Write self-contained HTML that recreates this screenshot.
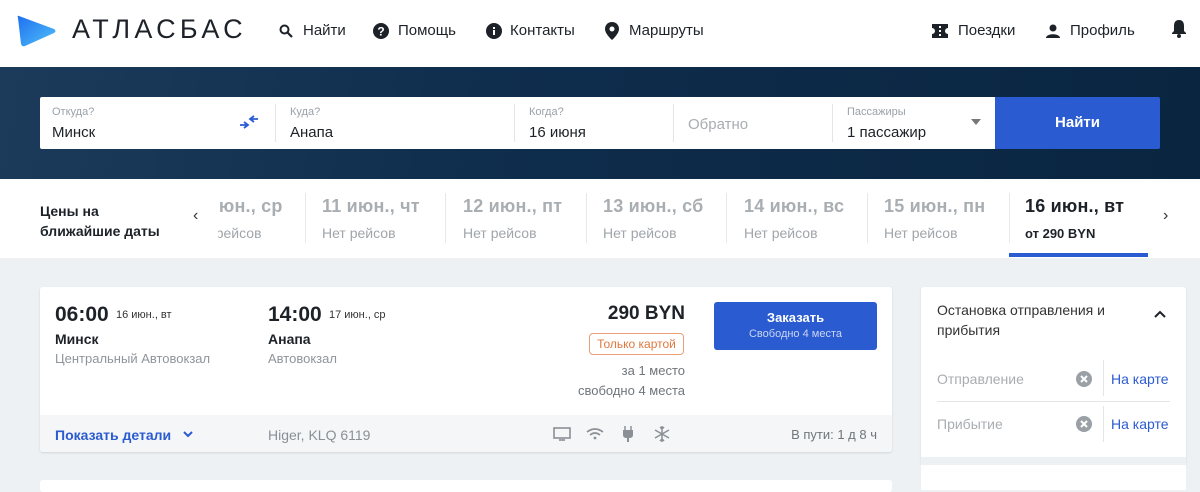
<!DOCTYPE html>
<html><head><meta charset="utf-8"><style>
*{margin:0;padding:0;box-sizing:border-box}
body{width:1200px;height:490px;overflow:hidden;background:#eef1f4;font-family:"Liberation Sans","DejaVu Sans",sans-serif;position:relative;color:#1d2228}
.a{position:absolute;white-space:nowrap}
.hdr{position:absolute;left:0;top:0;width:1200px;height:67px;background:#fff}
.nav{font-size:15px;color:#1d2228;top:22px}
.hero{position:absolute;left:0;top:67px;width:1200px;height:112px;background:linear-gradient(100deg,#1c3a5a 0%,#0f2d4d 40%,#092540 100%)}
.form{position:absolute;left:40px;top:97px;width:955px;height:52px;background:#fff;border-radius:2px 0 0 2px}
.lbl{font-size:11px;color:#9aa1a8;top:9px}
.val{font-size:15px;color:#1d2228;top:27px}
.sep{position:absolute;top:7px;width:1px;height:38px;background:#e3e6e9}
.btn{position:absolute;left:995px;top:97px;width:165px;height:52px;background:#2b5bd0;color:#fff;font-weight:bold;font-size:15px;text-align:center;line-height:52px;border-radius:0 2px 2px 0}
.dates{position:absolute;left:0;top:179px;width:1200px;height:79px;background:#fff}
.dt{font-size:18px;font-weight:bold;color:#a9aeb3;top:17px;letter-spacing:0.2px}
.dn{font-size:14px;color:#a0a5aa;top:46px}
.vs{position:absolute;top:14px;width:1px;height:50px;background:#e6e8ea}
.card{position:absolute;left:40px;top:287px;width:852px;height:165px;background:#fff;border-radius:3px;box-shadow:0 1px 2px rgba(0,0,0,.12)}
.foot{position:absolute;left:0;top:128px;width:852px;height:37px;background:#f4f6f8;border-radius:0 0 3px 3px}
.side{position:absolute;left:921px;top:287px;width:265px;height:178px;background:#fff;border-radius:3px;box-shadow:0 1px 2px rgba(0,0,0,.1)}
</style></head><body>
<div class="hdr">
<svg class="a" style="left:16px;top:14px" width="42" height="34" viewBox="0 0 42 34"><defs><linearGradient id="g" x1="0" y1="0" x2="1" y2="1"><stop offset="0" stop-color="#1f6ff0"/><stop offset="1" stop-color="#4fc0f8"/></linearGradient></defs><path d="M3 2 Q1 1 2 4 L5 30 Q6 33 9 32 L38 19 Q41 17 38 15 Z" fill="url(#g)"/></svg>
<div class="a" style="left:72px;top:14px;font-size:27px;letter-spacing:4.3px;color:#1d2228;font-weight:500">АТЛАСБАС</div>
<svg class="a" style="left:279px;top:24px" width="14" height="14" viewBox="0 0 14 14"><circle cx="5.5" cy="5.5" r="4" fill="none" stroke="#1d2228" stroke-width="2"/><path d="M8.5 8.5 L13 13" stroke="#1d2228" stroke-width="2.2"/></svg>
<div class="a nav" style="left:303px">Найти</div>
<svg class="a" style="left:373px;top:23px" width="16" height="16" viewBox="0 0 16 16"><circle cx="8" cy="8" r="8" fill="#1d2228"/><text x="8" y="12.5" font-size="12" font-weight="bold" fill="#fff" text-anchor="middle" font-family="Liberation Sans">?</text></svg>
<div class="a nav" style="left:398px">Помощь</div>
<svg class="a" style="left:486px;top:23px" width="16" height="16" viewBox="0 0 16 16"><circle cx="8" cy="8" r="8" fill="#1d2228"/><rect x="7" y="7" width="2" height="5" fill="#fff"/><rect x="7" y="4" width="2" height="2" fill="#fff"/></svg>
<div class="a nav" style="left:510px">Контакты</div>
<svg class="a" style="left:605px;top:22px" width="14" height="18" viewBox="0 0 14 18"><path d="M7 0 C3 0 0 3 0 7 C0 12 7 18 7 18 C7 18 14 12 14 7 C14 3 11 0 7 0Z" fill="#1d2228"/><circle cx="7" cy="7" r="2.5" fill="#fff"/></svg>
<div class="a nav" style="left:629px">Маршруты</div>
<svg class="a" style="left:932px;top:24px" width="16" height="14" viewBox="0 0 16 14"><path d="M0 0H16V4a3 3 0 0 0 0 6V14H0V10a3 3 0 0 0 0-6Z" fill="#1d2228"/><rect x="7" y="2" width="2" height="2" fill="#fff"/><rect x="7" y="6" width="2" height="2" fill="#fff"/><rect x="7" y="10" width="2" height="2" fill="#fff"/></svg>
<div class="a nav" style="left:958px">Поездки</div>
<svg class="a" style="left:1046px;top:24px" width="14" height="14" viewBox="0 0 14 14"><circle cx="7" cy="4" r="3.5" fill="#1d2228"/><path d="M0 14 C0 9 14 9 14 14Z" fill="#1d2228"/></svg>
<div class="a nav" style="left:1070px">Профиль</div>
<svg class="a" style="left:1171px;top:19px" width="16" height="19" viewBox="0 0 16 19"><path d="M8 1 C4 1 3 4 3 7 V12 L1 14 V15 H15 V14 L13 12 V7 C13 4 12 1 8 1Z" fill="#1d2228"/><circle cx="8" cy="17" r="2" fill="#1d2228"/></svg>
</div>
<div class="hero"></div>
<div class="form">
<div class="a lbl" style="left:12px">Откуда?</div><div class="a val" style="left:12px">Минск</div>
<svg class="a" style="left:199px;top:18px" width="20" height="14" viewBox="0 0 20 14"><path d="M11 4H19M15 1L11 4L15 7" stroke="#2b5bd0" stroke-width="1.8" fill="none"/><path d="M1 10H9M5 7L9 10L5 13" stroke="#2b5bd0" stroke-width="1.8" fill="none"/></svg>
<div class="sep" style="left:235px"></div>
<div class="a lbl" style="left:250px">Куда?</div><div class="a val" style="left:250px">Анапа</div>
<div class="sep" style="left:474px"></div>
<div class="a lbl" style="left:489px">Когда?</div><div class="a val" style="left:489px">16 июня</div>
<div class="sep" style="left:633px"></div>
<div class="a" style="left:648px;top:19px;font-size:15px;color:#a8adb2">Обратно</div>
<div class="sep" style="left:792px"></div>
<div class="a lbl" style="left:807px">Пассажиры</div><div class="a val" style="left:807px">1 пассажир</div>
<div class="a" style="left:931px;top:22px;width:0;height:0;border-left:5px solid transparent;border-right:5px solid transparent;border-top:6px solid #777"></div>
</div>
<div class="btn">Найти</div>
<div class="dates">
<div class="a" style="left:40px;top:22px;font-size:14px;font-weight:bold;line-height:20px;color:#1d2228">Цены на<br>ближайшие даты</div>
<div class="a" style="left:193px;top:28px;font-size:16px;color:#333">‹</div>
<div class="a" style="left:218px;top:0;width:88px;height:79px;overflow:hidden">
<div class="a dt" style="left:-36px">10 июн., ср</div><div class="a dn" style="left:-30px">Нет рейсов</div></div>
<div class="vs" style="left:305px"></div>
<div class="a dt" style="left:322px">11 июн., чт</div><div class="a dn" style="left:322px">Нет рейсов</div>
<div class="vs" style="left:445px"></div>
<div class="a dt" style="left:463px">12 июн., пт</div><div class="a dn" style="left:463px">Нет рейсов</div>
<div class="vs" style="left:586px"></div>
<div class="a dt" style="left:603px">13 июн., сб</div><div class="a dn" style="left:603px">Нет рейсов</div>
<div class="vs" style="left:726px"></div>
<div class="a dt" style="left:744px">14 июн., вс</div><div class="a dn" style="left:744px">Нет рейсов</div>
<div class="vs" style="left:867px"></div>
<div class="a dt" style="left:884px">15 июн., пн</div><div class="a dn" style="left:884px">Нет рейсов</div>
<div class="vs" style="left:1009px"></div>
<div class="a dt" style="left:1025px;color:#1d2228">16 июн., вт</div><div class="a" style="left:1025px;top:47px;font-size:13px;font-weight:bold;color:#1d2228">от 290 BYN</div>
<div class="a" style="left:1009px;top:74px;width:139px;height:4px;background:#2b5bd0"></div>
<div class="a" style="left:1163px;top:28px;font-size:16px;color:#333">›</div>
</div>
<div class="card">
<div class="a" style="left:15px;top:16px;font-size:21px;font-weight:bold">06:00</div>
<div class="a" style="left:76px;top:22px;font-size:11px;color:#333">16 июн., вт</div>
<div class="a" style="left:15px;top:44px;font-size:14px;font-weight:bold">Минск</div>
<div class="a" style="left:15px;top:64px;font-size:13px;color:#8f959b">Центральный Автовокзал</div>
<div class="a" style="left:228px;top:16px;font-size:21px;font-weight:bold">14:00</div>
<div class="a" style="left:289px;top:22px;font-size:11px;color:#333">17 июн., ср</div>
<div class="a" style="left:228px;top:44px;font-size:14px;font-weight:bold">Анапа</div>
<div class="a" style="left:228px;top:64px;font-size:13px;color:#8f959b">Автовокзал</div>
<div class="a" style="right:207px;top:16px;font-size:19px;font-weight:bold">290 BYN</div>
<div class="a" style="left:549px;top:46px;width:95px;height:22px;border:1px solid #e8a07a;border-radius:4px;font-size:12px;color:#e0773f;text-align:center;line-height:20px">Только картой</div>
<div class="a" style="right:207px;top:76px;font-size:13px;color:#6f757b">за 1 место</div>
<div class="a" style="right:207px;top:96px;font-size:13px;color:#6f757b">свободно 4 места</div>
<div class="a" style="left:674px;top:15px;width:163px;height:48px;background:#2b5bd0;border-radius:3px;color:#fff;text-align:center">
<div style="font-size:13px;font-weight:bold;margin-top:8px">Заказать</div><div style="font-size:11px;color:#c9d6f5;margin-top:3px">Свободно 4 места</div></div>
<div class="foot">
<div class="a" style="left:15px;top:12px;font-size:14px;color:#2b5bd0;font-weight:bold">Показать детали</div>
<svg class="a" style="left:143px;top:16px" width="10" height="7" viewBox="0 0 10 7"><path d="M1 1L5 5L9 1" stroke="#2b5bd0" stroke-width="2" fill="none"/></svg>
<div class="a" style="left:228px;top:12px;font-size:14px;color:#8a9096">Higer, KLQ 6119</div>
<svg class="a" style="left:513px;top:12px" width="18" height="14" viewBox="0 0 18 14"><rect x="1" y="1" width="16" height="10" fill="none" stroke="#8a9096" stroke-width="1.6"/><path d="M6 13H12" stroke="#8a9096" stroke-width="1.6"/></svg>
<svg class="a" style="left:546px;top:13px" width="18" height="12" viewBox="0 0 18 12"><path d="M1 4 Q9 -2 17 4M4 7 Q9 3 14 7" stroke="#8a9096" stroke-width="1.6" fill="none"/><circle cx="9" cy="10" r="1.4" fill="#8a9096"/></svg>
<svg class="a" style="left:582px;top:11px" width="12" height="16" viewBox="0 0 12 16"><path d="M3 0V4M9 0V4" stroke="#8a9096" stroke-width="1.5"/><path d="M1 4H11V9Q11 12 7 12V16H5V12Q1 12 1 9Z" fill="#8a9096"/></svg>
<svg class="a" style="left:614px;top:11px" width="16" height="16" viewBox="0 0 16 16" stroke="#8a9096" stroke-width="1.5" fill="none"><path d="M8 0V16M1 4L15 12M1 12L15 4M6 1L8 3L10 1M6 15L8 13L10 15"/></svg>
<div class="a" style="right:15px;top:12px;font-size:13px;color:#6f757b">В пути: 1 д 8 ч</div>
</div>
</div>
<div class="a" style="left:40px;top:480px;width:852px;height:12px;background:#fff;border-radius:3px"></div>
<div class="side">
<div class="a" style="left:16px;top:13px;font-size:14px;line-height:20px;color:#333">Остановка отправления и<br>прибытия</div>
<svg class="a" style="left:233px;top:23px" width="12" height="8" viewBox="0 0 12 8"><path d="M1 7L6 2L11 7" stroke="#1d2228" stroke-width="2" fill="none"/></svg>
<div class="a" style="left:16px;top:84px;font-size:14px;color:#a8adb2">Отправление</div>
<svg class="a" style="left:155px;top:84px" width="16" height="16" viewBox="0 0 16 16"><circle cx="8" cy="8" r="8" fill="#9aa0a6"/><path d="M5 5L11 11M11 5L5 11" stroke="#fff" stroke-width="2"/></svg>
<div class="a" style="left:182px;top:73px;width:1px;height:36px;background:#e3e6e9"></div>
<div class="a" style="left:190px;top:84px;font-size:14px;color:#2b5bd0">На карте</div>
<div class="a" style="left:16px;top:114px;width:233px;height:1px;background:#e3e6e9"></div>
<div class="a" style="left:16px;top:129px;font-size:14px;color:#a8adb2">Прибытие</div>
<svg class="a" style="left:155px;top:129px" width="16" height="16" viewBox="0 0 16 16"><circle cx="8" cy="8" r="8" fill="#9aa0a6"/><path d="M5 5L11 11M11 5L5 11" stroke="#fff" stroke-width="2"/></svg>
<div class="a" style="left:182px;top:119px;width:1px;height:36px;background:#e3e6e9"></div>
<div class="a" style="left:190px;top:129px;font-size:14px;color:#2b5bd0">На карте</div>
<div class="a" style="left:0;top:170px;width:265px;height:8px;background:#eef1f4"></div>
</div>
<div class="a" style="left:921px;top:465px;width:265px;height:25px;background:#fff"></div>
</body></html>
